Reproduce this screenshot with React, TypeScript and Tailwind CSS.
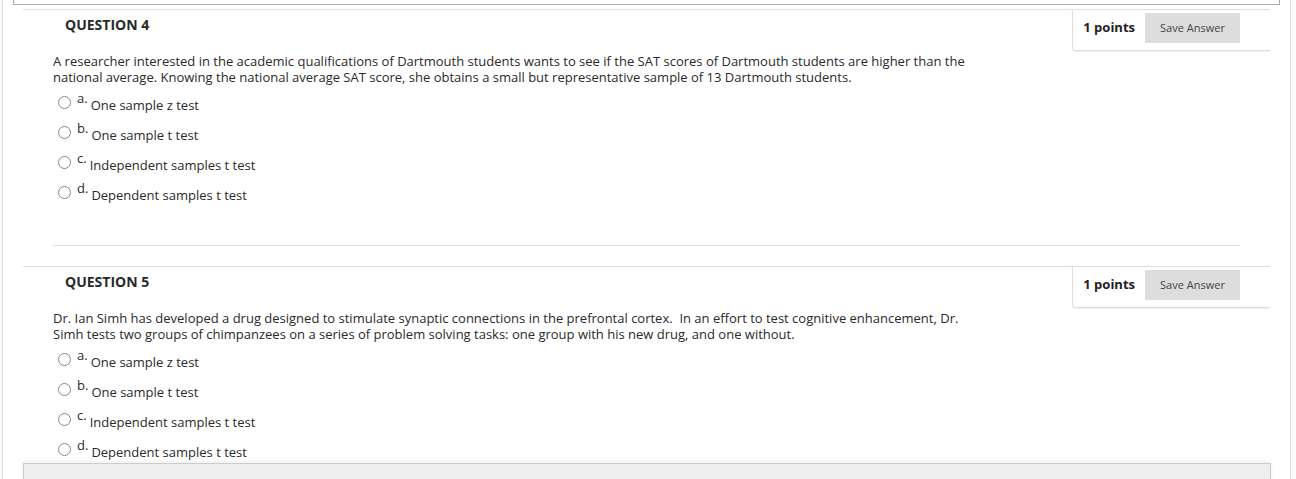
const questions = [
  {
    n: 4,
    text: "A researcher interested in the academic qualifications of Dartmouth students wants to see if the SAT scores of Dartmouth students are higher than the national average. Knowing the national average SAT score, she obtains a small but representative sample of 13 Dartmouth students.",
  },
  {
    n: 5,
    text: "Dr. Ian Simh has developed a drug designed to stimulate synaptic connections in the prefrontal cortex.  In an effort to test cognitive enhancement, Dr. Simh tests two groups of chimpanzees on a series of problem solving tasks: one group with his new drug, and one without.",
  },
];

const options = [
  { letter: "a.", label: "One sample z test" },
  { letter: "b.", label: "One sample t test" },
  { letter: "c.", label: "Independent samples t test" },
  { letter: "d.", label: "Dependent samples t test" },
];

function Question({ n, text, last }: { n: number; text: string; last?: boolean }) {
  return (
    <div className={"relative border-t border-[#ddd] " + (last ? "mt-[20px]" : "")}>
      {/* points + save */}
      <div className="absolute right-0 top-0 flex h-[41px] w-[198px] items-start justify-end gap-[10px] rounded-bl-[4px] border-b border-l border-[#ddd] bg-white pr-[30px] pt-[3px] shadow-[0_1px_1px_rgba(0,0,0,0.06)]">
        <span className="text-[13px] font-bold leading-[28px] text-[#222]">1 points</span>
        <button className="h-[30px] w-[95px] bg-[#ddd] text-[11px] text-[#444]">Save Answer</button>
      </div>

      <h3 className="pl-[42px] pt-[5px] text-[14px] font-bold leading-[20px] text-[#2a2a2a]">QUESTION {n}</h3>

      <p className="mt-[18px] w-[955px] whitespace-pre-wrap pl-[30px] text-[13px] leading-[16px] text-[#2a2a2a]">{text}</p>

      <ul className="mt-[3px] pl-[35px]">
        {options.map((o) => (
          <li key={o.letter} className="flex h-[30px] items-start">
            <span className="mt-[8px] h-[13px] w-[13px] rounded-full border border-[#888] bg-white" />
            <span className="ml-[6px] mt-[2px] text-[13px] leading-[16px] text-[#2a2a2a]">{o.letter}</span>
            <span className="ml-[3px] mt-[9px] text-[13px] leading-[16px] text-[#2a2a2a]">{o.label}</span>
          </li>
        ))}
      </ul>

      {!last && <div className="mx-[30px] mt-[37px] border-t border-[#ddd]" />}
    </div>
  );
}

export default function App() {
  return (
    <div className="relative h-[479px] w-[1296px] overflow-hidden bg-[#fbfbfb] font-['Open_Sans',sans-serif]">
      <div className="ml-[2px] h-full w-[1289px] border-x border-[#ddd] bg-white">
        <div className="ml-[10px] h-[5px] w-[1267px] border-x border-b border-[#aaa]" />
        <div className="ml-[20px] mt-[4px] w-[1247px]">
          <Question n={questions[0].n} text={questions[0].text} />
          <Question n={questions[1].n} text={questions[1].text} last />
        </div>
      </div>

      {/* submit bar */}
      <div className="absolute left-[23px] top-[463px] h-[30px] w-[1248px] border border-[#ccc] bg-[#eee] shadow-[0_-2px_4px_rgba(0,0,0,0.06)]" />
    </div>
  );
}
